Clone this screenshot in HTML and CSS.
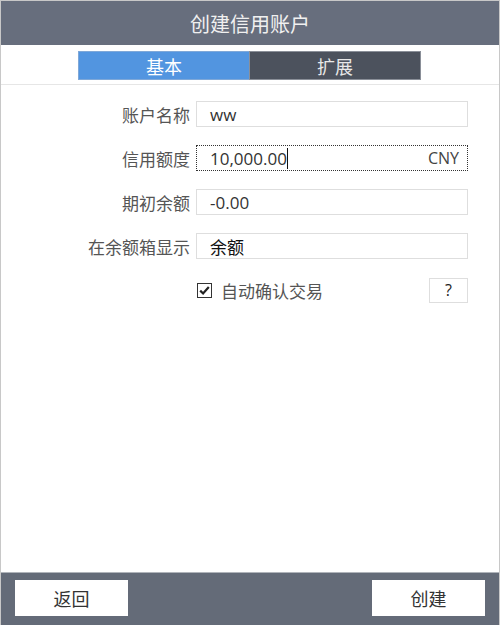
FILE: index.html
```html
<!DOCTYPE html>
<html>
<head>
<meta charset="utf-8">
<link rel="stylesheet" href="styles.css">
</head>
<body>
<div class="win">
  <div class="header">创建信用账户</div>
  <div class="tabs">
    <div class="tab active">基本</div>
    <div class="tab">扩展</div>
  </div>
  <div class="content">
    <div class="row">
      <div class="label">账户名称</div>
      <div class="field"><span class="val">ww</span></div>
    </div>
    <div class="row">
      <div class="label">信用额度</div>
      <div class="field focus"><span class="val">10,000.00</span><span class="caret"></span><span class="unit">CNY</span></div>
    </div>
    <div class="row">
      <div class="label">期初余额</div>
      <div class="field"><span class="val">-0.00</span></div>
    </div>
    <div class="row">
      <div class="label">在余额箱显示</div>
      <div class="field"><span class="val dark">余额</span></div>
    </div>
    <div class="row">
      <div class="label"></div>
      <div class="check-area">
        <span class="box"><svg viewBox="0 0 15 15" width="15" height="15"><rect x="0.5" y="0.5" width="14" height="14" fill="#fff" stroke="#333"/><path d="M3.2 7.6 L6.1 10.5 L11.8 4" fill="none" stroke="#222" stroke-width="2.2"/></svg></span>
        <span class="check-text">自动确认交易</span>
        <span class="help">?</span>
      </div>
    </div>
  </div>
  <div class="footer">
    <div class="btn">返回</div>
    <div class="btn">创建</div>
  </div>
</div>
</body>
</html>
```
FILE: styles.css
```css
html, body {
  margin: 0;
  padding: 0;
  background: #fff;
}
.win {
  width: 500px;
  height: 625px;
  box-sizing: border-box;
  border-left: 1px solid #c8c8c8;
  border-right: 1px solid #c8c8c8;
  border-top: 1px solid #c8c8c8;
  display: flex;
  flex-direction: column;
  font-family: "Noto Sans CJK SC", "Open Sans", sans-serif;
}
.header {
  height: 44px;
  background: #676e7d;
  color: #f0f0f0;
  font-size: 20px;
  display: flex;
  align-items: center;
  justify-content: center;
}
.tabs {
  display: flex;
  justify-content: center;
  padding-top: 6px;
  padding-bottom: 4px;
  border-bottom: 1px solid #e6e6e6;
}
.tab {
  width: 170px;
  height: 27px;
  border: 1px solid #8a8f98;
  margin-left: -1px;
  background: #4c525d;
  color: #e8e8e8;
  font-size: 18px;
  display: flex;
  align-items: center;
  justify-content: center;
  line-height: 1;
}
.tab.active {
  background: #5295e0;
  color: #fff;
  border-color: #7fa8d8;
}
.content {
  flex: 1;
  padding-top: 16px;
}
.row {
  display: flex;
  align-items: center;
  height: 26px;
  margin-bottom: 18px;
}
.label {
  width: 195px;
  text-align: right;
  padding-right: 6px;
  box-sizing: border-box;
  color: #555;
  font-size: 17px;
  line-height: 1;
}
.field {
  width: 272px;
  height: 26px;
  box-sizing: border-box;
  border: 1px solid #dedede;
  display: flex;
  align-items: center;
  padding: 0 8px 0 13px;
  font-family: "Open Sans", "Noto Sans CJK SC", sans-serif;
  font-size: 17px;
  color: #333;
}
.field.focus {
  border: 1px dotted #333;
}
.val.dark {
  color: #111;
  font-family: "Noto Sans CJK SC", sans-serif;
}
.caret {
  width: 1px;
  height: 21px;
  background: #111;
}
.unit {
  margin-left: auto;
  color: #444;
  font-size: 16px;
}
.check-area {
  width: 272px;
  display: flex;
  align-items: center;
  height: 26px;
}
.box {
  display: flex;
  margin-left: 1px;
  margin-right: 9px;
}
.check-text {
  color: #555;
  font-size: 17px;
}
.help {
  margin-left: auto;
  width: 39px;
  height: 25px;
  box-sizing: border-box;
  border: 1px solid #dedede;
  display: flex;
  align-items: center;
  justify-content: center;
  font-size: 16px;
  color: #222;
  font-family: "Open Sans", sans-serif;
}
.footer {
  height: 53px;
  box-sizing: border-box;
  background: #646b78;
  border-top: 1px solid #b0b4ba;
  display: flex;
  justify-content: space-between;
  align-items: flex-start;
  padding: 7px 14px 0 14px;
}
.btn {
  width: 113px;
  height: 36px;
  background: #fff;
  display: flex;
  align-items: center;
  justify-content: center;
  font-size: 18px;
  color: #333;
}
```
